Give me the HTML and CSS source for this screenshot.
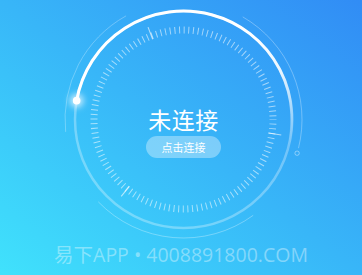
FILE: index.html
```html
<!DOCTYPE html>
<html>
<head>
<meta charset="utf-8">
<link rel="stylesheet" href="styles.css">
</head>
<body>
<div class="screen">
  <div class="dial">
    <svg class="dial-art" width="362" height="240" viewBox="0 0 362 240">
      <defs>
        <linearGradient id="arcGrad" gradientUnits="userSpaceOnUse" x1="240" y1="40" x2="292" y2="145">
          <stop offset="0" stop-color="#fff" stop-opacity="1"/>
          <stop offset="0.4" stop-color="#fff" stop-opacity="0.85"/>
          <stop offset="1" stop-color="#fff" stop-opacity="0"/>
        </linearGradient>
        <filter id="glow" x="-2" y="-2" width="5" height="5">
          <feGaussianBlur stdDeviation="3"/>
        </filter>
      </defs>
      <path d="M 65.65 131.89 A 118.5 118.5 0 0 1 126.05 15.86" fill="none" stroke="rgba(255,255,255,0.28)" stroke-width="1"/>
      <path d="M 242.75 16.88 A 118.5 118.5 0 0 1 298.48 148.17" fill="none" stroke="rgba(255,255,255,0.3)" stroke-width="1"/>
      <circle cx="297.1" cy="153.2" r="2.2" fill="none" stroke="rgba(255,255,255,0.4)" stroke-width="1"/>
      <path d="M 253.15 215.37 A 118.5 118.5 0 0 1 98.26 201.82" fill="none" stroke="rgba(255,255,255,0.3)" stroke-width="1"/>
      <circle cx="183.5" cy="119.5" r="108.5" fill="none" stroke="rgba(255,255,255,0.3)" stroke-width="2.5"/>
      <circle cx="183.5" cy="119.5" r="89.5" fill="none" stroke="rgba(255,255,255,0.55)" stroke-width="7" stroke-dasharray="1 3.6862" stroke-dashoffset="0.5"/>
      <g stroke="rgba(255,255,255,0.6)" stroke-width="1.1">
        <line x1="268.44" y1="132.95" x2="281.28" y2="134.99"/>
        <line x1="129.38" y1="186.33" x2="121.20" y2="196.44"/>
        <line x1="152.68" y1="39.21" x2="148.02" y2="27.08"/>
      </g>
      <path d="M 76.65 100.66 A 108.5 108.5 0 1 1 285.46 156.61" fill="none" stroke="url(#arcGrad)" stroke-width="3" stroke-linecap="round"/>
      <circle cx="76.65" cy="100.66" r="7" fill="rgba(255,255,255,0.7)" filter="url(#glow)"/>
      <circle cx="76.65" cy="100.66" r="3.8" fill="#fff"/>
    </svg>
    <div class="center">
      <div class="status">未连接</div>
      <div class="connect-btn">点击连接</div>
    </div>
  </div>
  <div class="footer">易下APP • 4008891800.COM</div>
</div>
</body>
</html>
```

FILE: styles.css
```css
* { box-sizing: border-box; }
html, body { margin: 0; padding: 0; }
body {
  width: 362px;
  height: 275px;
  overflow: hidden;
  font-family: "Noto Sans CJK SC", "Open Sans", sans-serif;
}
.screen {
  width: 362px;
  height: 275px;
  background: linear-gradient(to bottom left, #318cf5 0%, #38b6f8 50%, #40e2fc 100%);
  display: flex;
  flex-direction: column;
}
.dial {
  display: grid;
  width: 362px;
  height: 240px;
}
.dial-art, .center {
  grid-area: 1 / 1;
}
.dial-art { display: block; }
.center {
  display: flex;
  flex-direction: column;
  align-items: center;
  padding-top: 104px;
  padding-left: 5px;
}
.status {
  color: #fff;
  font-size: 23px;
  line-height: 30px;
  letter-spacing: 0.5px;
}
.connect-btn {
  margin-top: 2px;
  width: 75px;
  height: 22px;
  border-radius: 11px;
  background: rgba(255, 255, 255, 0.35);
  color: #fff;
  font-size: 11px;
  line-height: 22px;
  text-align: center;
}
.footer {
  height: 35px;
  display: flex;
  align-items: center;
  justify-content: center;
  padding-bottom: 9px;
  color: rgba(255, 255, 255, 0.38);
  font-family: "Open Sans", "Noto Sans CJK SC", sans-serif;
  font-size: 19.5px;
  white-space: nowrap;
}
```
